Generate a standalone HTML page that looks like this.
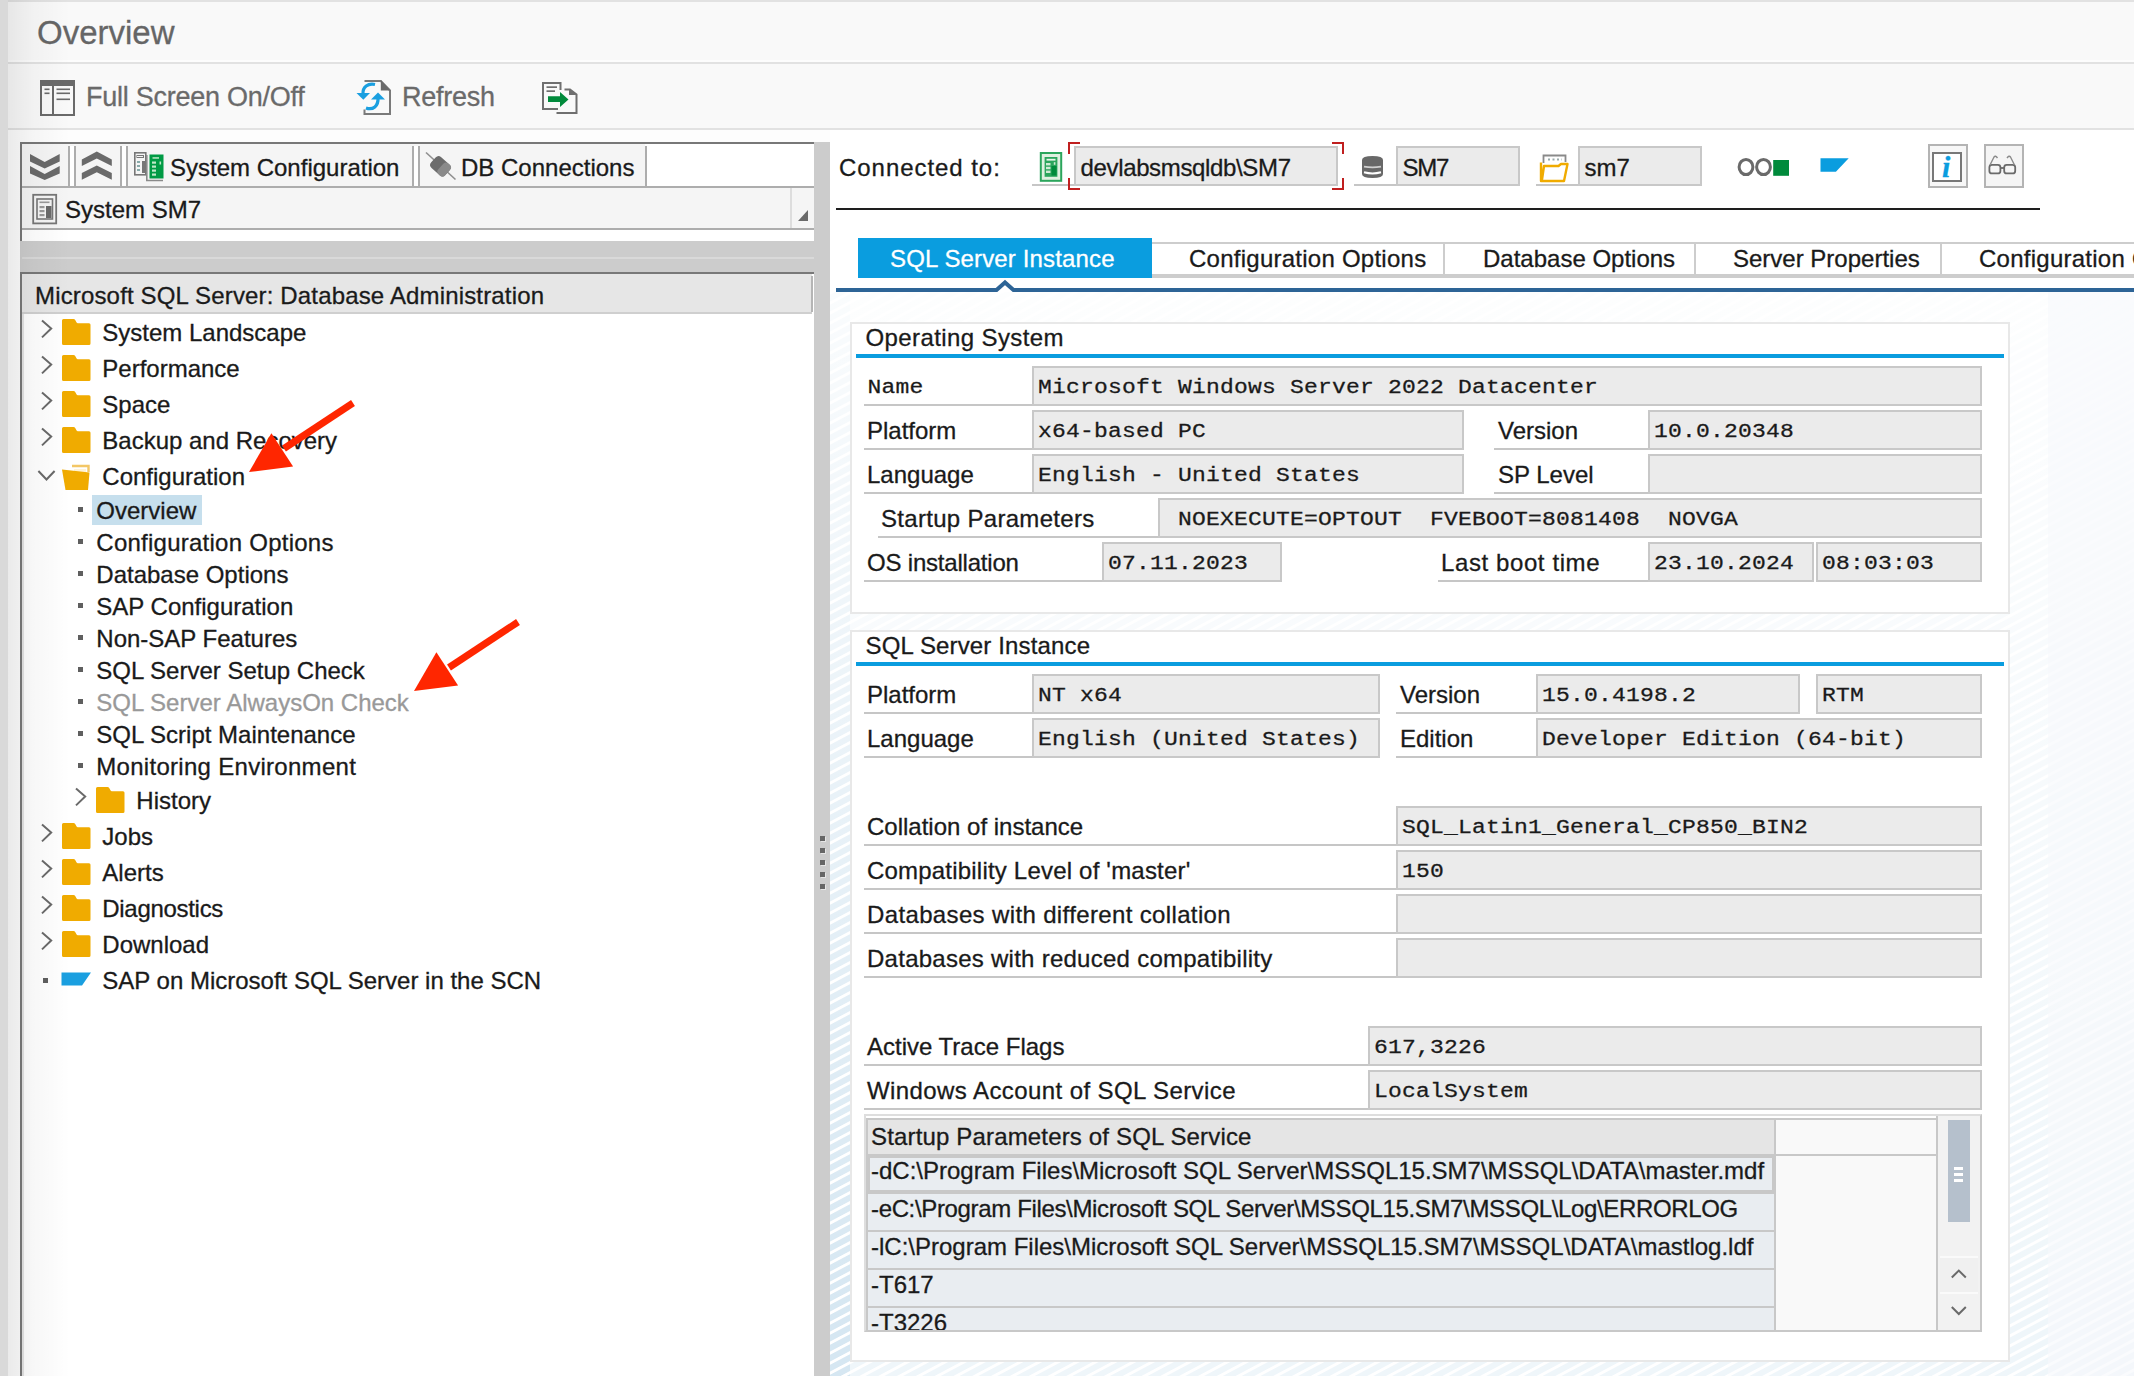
<!DOCTYPE html>
<html><head><meta charset="utf-8"><title>Overview</title>
<style>
html,body{margin:0;padding:0;}
body{width:2134px;height:1376px;position:relative;overflow:hidden;background:#f9f9f9;font-family:"Liberation Sans",sans-serif;}
div{box-sizing:border-box;}
.t{position:absolute;white-space:pre;font-size:24px;line-height:30px;color:#1a1a1a;-webkit-text-stroke:0.3px #1a1a1a;}
.s{font-family:"Liberation Sans",sans-serif;}
.m{font-family:"Liberation Mono",monospace;}
.r{font-family:"Liberation Serif",serif;}
</style></head><body>
<div style="position:absolute;left:0px;top:0px;width:2134px;height:130px;background:#f9f9f9;"></div>
<div style="position:absolute;left:0px;top:0px;width:2134px;height:2px;background:#e2e2e2;"></div>
<div style="position:absolute;left:8px;top:60px;width:2126px;height:2px;background:#fdfdfd;"></div>
<div style="position:absolute;left:8px;top:62px;width:2126px;height:2px;background:#e2e2e2;"></div>
<div style="position:absolute;left:8px;top:128px;width:2126px;height:2px;background:#e2e2e2;"></div>
<div style="position:absolute;left:0px;top:130px;width:830px;height:1246px;background:#fdfdfd;"></div>
<div style="position:absolute;left:830px;top:130px;width:1304px;height:1246px;background:#ffffff;"></div>
<div class="t s" style="left:37px;top:12.07px;font-size:33px;line-height:41px;color:#666666;-webkit-text-stroke-color:#666666;">Overview</div>
<svg style="position:absolute;left:38px;top:78px;" width="42" height="40" viewBox="0 0 42 40">
<rect x="3" y="3" width="33" height="34" fill="#f9f9f9" stroke="#6a6a6a" stroke-width="2"/>
<rect x="2" y="2" width="35" height="6" fill="#6a6a6a"/>
<rect x="14" y="7" width="2" height="30" fill="#6a6a6a"/>
<rect x="6.5" y="10.5" width="5" height="1.6" fill="#6a6a6a"/>
<rect x="6.5" y="14.5" width="5" height="1.6" fill="#6a6a6a"/>
<rect x="18.5" y="10.5" width="13.5" height="1.6" fill="#6a6a6a"/>
<rect x="18.5" y="14.5" width="13.5" height="1.6" fill="#6a6a6a"/>
<rect x="18.5" y="20.5" width="13.5" height="1.6" fill="#6a6a6a"/>
</svg>
<div class="t s" style="left:86px;top:79.64px;font-size:27px;line-height:34px;color:#6a6a6a;-webkit-text-stroke-color:#6a6a6a;letter-spacing:-0.25px;">Full Screen On/Off</div>
<svg style="position:absolute;left:354px;top:75px;" width="42" height="44" viewBox="0 0 42 44">
<path d="M10.5 6 H26.8 L36 15.5 V39 H10.5 V34.5" fill="none" stroke="#7a7a7a" stroke-width="2"/>
<path d="M26.8 5 V15.5 H36.5 Z" fill="#6a6a6a"/>
<path d="M21 9.5 C14 8 8.5 12 9 19" fill="none" stroke="#1a9fe0" stroke-width="3.2"/>
<path d="M2.5 18 H16 L9.3 24.8 Z" fill="#1a9fe0"/>
<path d="M12 33 C19 35.5 24.5 31 24 23" fill="none" stroke="#1a9fe0" stroke-width="3.2"/>
<path d="M17 24.5 H31 L24 17.6 Z" fill="#1a9fe0"/>
</svg>
<div class="t s" style="left:402px;top:79.64px;font-size:27px;line-height:34px;color:#6a6a6a;-webkit-text-stroke-color:#6a6a6a;letter-spacing:-0.25px;">Refresh</div>
<svg style="position:absolute;left:538px;top:78px;" width="44" height="40" viewBox="0 0 44 40">
<path d="M22.5 12 V5 H5 V31 H20" fill="none" stroke="#6f6f6f" stroke-width="2"/>
<rect x="8.5" y="8.3" width="10.5" height="1.7" fill="#6f6f6f"/>
<rect x="8.5" y="12.3" width="8.5" height="1.7" fill="#6f6f6f"/>
<path d="M26.5 11.5 H32 L38.5 16.5 V35 H18.5" fill="none" stroke="#6f6f6f" stroke-width="2"/>
<path d="M31 11 V17 H38.5 Z" fill="#6f6f6f"/>
<path d="M10 18.2 H22 V14 L30.5 21.5 L22 29 V24 H10 Z" fill="#008a3b"/>
</svg>
<div style="position:absolute;left:814px;top:142px;width:16px;height:1234px;background:#cccccc;"></div>
<div style="position:absolute;left:22px;top:144px;width:792px;height:42px;background:#f5f5f5;"></div>
<div style="position:absolute;left:645px;top:144px;width:169px;height:42px;background:#ffffff;"></div>
<div style="position:absolute;left:20px;top:142px;width:794px;height:2px;background:#787878;"></div>
<div style="position:absolute;left:20px;top:142px;width:2px;height:100px;background:#787878;"></div>
<div style="position:absolute;left:22px;top:186px;width:792px;height:2px;background:#adadad;"></div>
<div style="position:absolute;left:22px;top:188px;width:792px;height:40px;background:#f5f5f5;"></div>
<div style="position:absolute;left:22px;top:228px;width:792px;height:2px;background:#adadad;"></div>
<div style="position:absolute;left:22px;top:230px;width:792px;height:11px;background:#ffffff;"></div>
<div style="position:absolute;left:20px;top:241px;width:794px;height:31px;background:#cccccc;"></div>
<div style="position:absolute;left:22px;top:257px;width:792px;height:2px;background:#d9d9d9;"></div>
<div style="position:absolute;left:68px;top:146px;width:2px;height:40px;background:#adadad;"></div>
<div style="position:absolute;left:70px;top:146px;width:4px;height:40px;background:#ffffff;"></div>
<div style="position:absolute;left:74px;top:146px;width:2px;height:40px;background:#adadad;"></div>
<div style="position:absolute;left:120px;top:146px;width:2px;height:40px;background:#adadad;"></div>
<div style="position:absolute;left:122px;top:146px;width:4px;height:40px;background:#ffffff;"></div>
<div style="position:absolute;left:126px;top:146px;width:2px;height:40px;background:#adadad;"></div>
<div style="position:absolute;left:412px;top:146px;width:2px;height:40px;background:#adadad;"></div>
<div style="position:absolute;left:414px;top:146px;width:4px;height:40px;background:#ffffff;"></div>
<div style="position:absolute;left:418px;top:146px;width:2px;height:40px;background:#adadad;"></div>
<div style="position:absolute;left:645px;top:146px;width:2px;height:40px;background:#adadad;"></div>
<svg style="position:absolute;left:28px;top:150px;" width="34" height="32" viewBox="0 0 34 32">
<path d="M2 4 L16.7 12 L31.7 4 V11.5 L16.7 18.5 L2 11.5 Z" fill="#6a6a6a"/>
<path d="M2 16 L16.7 24 L31.7 16 V23.5 L16.7 30 L2 23.5 Z" fill="#6a6a6a"/>
</svg>
<svg style="position:absolute;left:80px;top:150px;" width="34" height="32" viewBox="0 0 34 32">
<path d="M1.8 9.5 L16.8 1.6 L31.8 9.5 V16 L16.8 8.6 L1.8 16 Z" fill="#6a6a6a"/>
<path d="M1.8 23 L16.8 15.5 L31.8 23 V29.7 L16.8 22.2 L1.8 29.7 Z" fill="#6a6a6a"/>
</svg>
<svg style="position:absolute;left:132px;top:150px;" width="34" height="34" viewBox="0 0 34 34">
<rect x="2.8" y="2.8" width="11" height="22" fill="#f5f5f5" stroke="#777" stroke-width="1.6"/>
<rect x="5" y="5.5" width="6.5" height="2" fill="none" stroke="#777" stroke-width="1"/>
<rect x="5" y="11" width="3" height="2" fill="#8aa"/><rect x="5" y="15" width="3" height="2" fill="#8aa"/><rect x="5" y="19" width="3" height="2" fill="#8aa"/>
<rect x="10" y="11" width="3" height="12" fill="#777"/>
<path d="M14.8 5 V30.5 H31" fill="none" stroke="#8a8a8a" stroke-width="1.6"/>
<rect x="17.5" y="4.5" width="14" height="24" fill="#009a44"/>
<rect x="20.5" y="7.2" width="6.5" height="1.5" fill="#bfe8c8"/>
<rect x="20" y="11.5" width="4" height="2.2" fill="#bfe8c8"/><rect x="20" y="15.5" width="4" height="2.2" fill="#bfe8c8"/><rect x="20" y="19.5" width="4" height="2.2" fill="#bfe8c8"/><rect x="20" y="23.5" width="4" height="2.2" fill="#bfe8c8"/>
<rect x="27.5" y="11.5" width="1.6" height="3" fill="#bfe8c8"/>
</svg>
<div class="t s" style="left:170px;top:152.68px;">System Configuration</div>
<svg style="position:absolute;left:422px;top:148px;" width="38" height="36" viewBox="0 0 38 36">
<path d="M4 4.5 L33.5 31.5" stroke="#8f8f8f" stroke-width="1.6"/>
<g transform="rotate(42 18.5 18.2)">
<rect x="9" y="11" width="19" height="14.5" rx="4" fill="#6c6c6c"/>
<rect x="19" y="11" width="9" height="14.5" rx="3.5" fill="#8a8a8a"/>
</g>
</svg>
<div class="t s" style="left:461px;top:152.68px;">DB Connections</div>
<svg style="position:absolute;left:30px;top:192px;" width="30" height="34" viewBox="0 0 30 34">
<rect x="3.2" y="2.8" width="23" height="28.6" fill="#f5f5f5" stroke="#777" stroke-width="1.8"/>
<rect x="7" y="7" width="15.5" height="20" fill="none" stroke="#777" stroke-width="1.6"/>
<rect x="9.5" y="9.5" width="10" height="1.6" fill="#999"/>
<rect x="9.5" y="14" width="5" height="2.2" fill="#999"/><rect x="9.5" y="18" width="5" height="2.2" fill="#999"/><rect x="9.5" y="22" width="5" height="2.2" fill="#999"/>
<rect x="16" y="14" width="5.5" height="12" fill="#6a6a6a"/>
</svg>
<div class="t s" style="left:65px;top:194.68px;">System SM7</div>
<div style="position:absolute;left:790px;top:188px;width:2px;height:40px;background:#dddddd;"></div>
<svg style="position:absolute;left:792px;top:188px;" width="22" height="40" viewBox="0 0 22 40"><path d="M6 33 L16 33 L16 22 Z" fill="#6a6a6a"/></svg>
<div style="position:absolute;left:22px;top:274px;width:792px;height:1102px;background:#ffffff;"></div>
<div style="position:absolute;left:20px;top:272px;width:794px;height:2px;background:#787878;"></div>
<div style="position:absolute;left:20px;top:272px;width:2px;height:1104px;background:#787878;"></div>
<div style="position:absolute;left:22px;top:314px;width:2px;height:1062px;background:#e3e3e3;"></div>
<div style="position:absolute;left:22px;top:274px;width:790px;height:38px;background:#e6e6e6;"></div>
<div style="position:absolute;left:22px;top:312px;width:790px;height:2px;background:#cfcfcf;"></div>
<div style="position:absolute;left:811px;top:276px;width:2px;height:36px;background:#b5b5b5;"></div>
<div class="t s" style="left:35px;top:280.68px;letter-spacing:0.16px;">Microsoft SQL Server: Database Administration</div>
<svg style="position:absolute;left:40px;top:319px;" width="14" height="20" viewBox="0 0 14 20"><path d="M2 1.4 L11.2 9.5 L2 18.4" fill="none" stroke="#6a6a6a" stroke-width="2"/></svg>
<svg style="position:absolute;left:62px;top:319px;" width="30" height="27" viewBox="0 0 30 27"><path d="M1.5 0 H11.5 Q12.6 0 13.2 1 L14.6 3.6 Q15 4.2 15.8 4.2 H27 Q28.5 4.2 28.5 5.7 V24.5 Q28.5 26 27 26 H1.5 Q0 26 0 24.5 V1.5 Q0 0 1.5 0 Z" fill="#f0ab00"/></svg>
<div class="t s" style="left:102.3px;top:317.68px;">System Landscape</div>
<svg style="position:absolute;left:40px;top:355px;" width="14" height="20" viewBox="0 0 14 20"><path d="M2 1.4 L11.2 9.5 L2 18.4" fill="none" stroke="#6a6a6a" stroke-width="2"/></svg>
<svg style="position:absolute;left:62px;top:355px;" width="30" height="27" viewBox="0 0 30 27"><path d="M1.5 0 H11.5 Q12.6 0 13.2 1 L14.6 3.6 Q15 4.2 15.8 4.2 H27 Q28.5 4.2 28.5 5.7 V24.5 Q28.5 26 27 26 H1.5 Q0 26 0 24.5 V1.5 Q0 0 1.5 0 Z" fill="#f0ab00"/></svg>
<div class="t s" style="left:102.3px;top:353.68px;">Performance</div>
<svg style="position:absolute;left:40px;top:391px;" width="14" height="20" viewBox="0 0 14 20"><path d="M2 1.4 L11.2 9.5 L2 18.4" fill="none" stroke="#6a6a6a" stroke-width="2"/></svg>
<svg style="position:absolute;left:62px;top:391px;" width="30" height="27" viewBox="0 0 30 27"><path d="M1.5 0 H11.5 Q12.6 0 13.2 1 L14.6 3.6 Q15 4.2 15.8 4.2 H27 Q28.5 4.2 28.5 5.7 V24.5 Q28.5 26 27 26 H1.5 Q0 26 0 24.5 V1.5 Q0 0 1.5 0 Z" fill="#f0ab00"/></svg>
<div class="t s" style="left:102.3px;top:389.68px;">Space</div>
<svg style="position:absolute;left:40px;top:427px;" width="14" height="20" viewBox="0 0 14 20"><path d="M2 1.4 L11.2 9.5 L2 18.4" fill="none" stroke="#6a6a6a" stroke-width="2"/></svg>
<svg style="position:absolute;left:62px;top:427px;" width="30" height="27" viewBox="0 0 30 27"><path d="M1.5 0 H11.5 Q12.6 0 13.2 1 L14.6 3.6 Q15 4.2 15.8 4.2 H27 Q28.5 4.2 28.5 5.7 V24.5 Q28.5 26 27 26 H1.5 Q0 26 0 24.5 V1.5 Q0 0 1.5 0 Z" fill="#f0ab00"/></svg>
<div class="t s" style="left:102.3px;top:425.68px;">Backup and Recovery</div>
<svg style="position:absolute;left:37px;top:469px;" width="20" height="14" viewBox="0 0 20 14"><path d="M1.4 2 L9.5 10.5 L17.6 2" fill="none" stroke="#6a6a6a" stroke-width="2"/></svg>
<svg style="position:absolute;left:62px;top:464px;" width="30" height="27" viewBox="0 0 30 27">
<path d="M10 2 H26.5 V8" fill="none" stroke="#f3c766" stroke-width="2.4"/>
<path d="M12 5 H24 V9 H12 Z" fill="#fff3d6"/>
<path d="M0 5.5 L27.5 8.5 L26 26 H3.5 Z" fill="#f0ab00"/>
</svg>
<div class="t s" style="left:102.3px;top:461.68px;">Configuration</div>
<div style="position:absolute;left:92px;top:495px;width:110px;height:30px;background:#c6dfed;"></div>
<div style="position:absolute;left:78px;top:507px;width:5px;height:5px;background:#5f5f5f;"></div>
<div class="t s" style="left:96.3px;top:495.68px;">Overview</div>
<div style="position:absolute;left:78px;top:539px;width:5px;height:5px;background:#5f5f5f;"></div>
<div class="t s" style="left:96.3px;top:527.68px;letter-spacing:0.25px;">Configuration Options</div>
<div style="position:absolute;left:78px;top:571px;width:5px;height:5px;background:#5f5f5f;"></div>
<div class="t s" style="left:96.3px;top:559.68px;">Database Options</div>
<div style="position:absolute;left:78px;top:603px;width:5px;height:5px;background:#5f5f5f;"></div>
<div class="t s" style="left:96.3px;top:591.68px;">SAP Configuration</div>
<div style="position:absolute;left:78px;top:635px;width:5px;height:5px;background:#5f5f5f;"></div>
<div class="t s" style="left:96.3px;top:623.68px;">Non-SAP Features</div>
<div style="position:absolute;left:78px;top:667px;width:5px;height:5px;background:#5f5f5f;"></div>
<div class="t s" style="left:96.3px;top:655.68px;">SQL Server Setup Check</div>
<div style="position:absolute;left:78px;top:699px;width:5px;height:5px;background:#5f5f5f;"></div>
<div class="t s" style="left:96.3px;top:687.68px;color:#999999;-webkit-text-stroke-color:#999999;">SQL Server AlwaysOn Check</div>
<div style="position:absolute;left:78px;top:731px;width:5px;height:5px;background:#5f5f5f;"></div>
<div class="t s" style="left:96.3px;top:719.68px;">SQL Script Maintenance</div>
<div style="position:absolute;left:78px;top:763px;width:5px;height:5px;background:#5f5f5f;"></div>
<div class="t s" style="left:96.3px;top:751.68px;letter-spacing:0.29px;">Monitoring Environment</div>
<svg style="position:absolute;left:74px;top:787px;" width="14" height="20" viewBox="0 0 14 20"><path d="M2 1.4 L11.2 9.5 L2 18.4" fill="none" stroke="#6a6a6a" stroke-width="2"/></svg>
<svg style="position:absolute;left:96px;top:787px;" width="30" height="27" viewBox="0 0 30 27"><path d="M1.5 0 H11.5 Q12.6 0 13.2 1 L14.6 3.6 Q15 4.2 15.8 4.2 H27 Q28.5 4.2 28.5 5.7 V24.5 Q28.5 26 27 26 H1.5 Q0 26 0 24.5 V1.5 Q0 0 1.5 0 Z" fill="#f0ab00"/></svg>
<div class="t s" style="left:136.3px;top:785.68px;">History</div>
<svg style="position:absolute;left:40px;top:823px;" width="14" height="20" viewBox="0 0 14 20"><path d="M2 1.4 L11.2 9.5 L2 18.4" fill="none" stroke="#6a6a6a" stroke-width="2"/></svg>
<svg style="position:absolute;left:62px;top:823px;" width="30" height="27" viewBox="0 0 30 27"><path d="M1.5 0 H11.5 Q12.6 0 13.2 1 L14.6 3.6 Q15 4.2 15.8 4.2 H27 Q28.5 4.2 28.5 5.7 V24.5 Q28.5 26 27 26 H1.5 Q0 26 0 24.5 V1.5 Q0 0 1.5 0 Z" fill="#f0ab00"/></svg>
<div class="t s" style="left:102.3px;top:821.68px;">Jobs</div>
<svg style="position:absolute;left:40px;top:859px;" width="14" height="20" viewBox="0 0 14 20"><path d="M2 1.4 L11.2 9.5 L2 18.4" fill="none" stroke="#6a6a6a" stroke-width="2"/></svg>
<svg style="position:absolute;left:62px;top:859px;" width="30" height="27" viewBox="0 0 30 27"><path d="M1.5 0 H11.5 Q12.6 0 13.2 1 L14.6 3.6 Q15 4.2 15.8 4.2 H27 Q28.5 4.2 28.5 5.7 V24.5 Q28.5 26 27 26 H1.5 Q0 26 0 24.5 V1.5 Q0 0 1.5 0 Z" fill="#f0ab00"/></svg>
<div class="t s" style="left:102.3px;top:857.68px;">Alerts</div>
<svg style="position:absolute;left:40px;top:895px;" width="14" height="20" viewBox="0 0 14 20"><path d="M2 1.4 L11.2 9.5 L2 18.4" fill="none" stroke="#6a6a6a" stroke-width="2"/></svg>
<svg style="position:absolute;left:62px;top:895px;" width="30" height="27" viewBox="0 0 30 27"><path d="M1.5 0 H11.5 Q12.6 0 13.2 1 L14.6 3.6 Q15 4.2 15.8 4.2 H27 Q28.5 4.2 28.5 5.7 V24.5 Q28.5 26 27 26 H1.5 Q0 26 0 24.5 V1.5 Q0 0 1.5 0 Z" fill="#f0ab00"/></svg>
<div class="t s" style="left:102.3px;top:893.68px;letter-spacing:-0.3px;">Diagnostics</div>
<svg style="position:absolute;left:40px;top:931px;" width="14" height="20" viewBox="0 0 14 20"><path d="M2 1.4 L11.2 9.5 L2 18.4" fill="none" stroke="#6a6a6a" stroke-width="2"/></svg>
<svg style="position:absolute;left:62px;top:931px;" width="30" height="27" viewBox="0 0 30 27"><path d="M1.5 0 H11.5 Q12.6 0 13.2 1 L14.6 3.6 Q15 4.2 15.8 4.2 H27 Q28.5 4.2 28.5 5.7 V24.5 Q28.5 26 27 26 H1.5 Q0 26 0 24.5 V1.5 Q0 0 1.5 0 Z" fill="#f0ab00"/></svg>
<div class="t s" style="left:102.3px;top:929.68px;">Download</div>
<div style="position:absolute;left:43px;top:978px;width:5px;height:5px;background:#5f5f5f;"></div>
<svg style="position:absolute;left:60px;top:970px;" width="32" height="18" viewBox="0 0 32 18"><path d="M1.5 2.5 H31 L22 15.5 H1.5 Z" fill="#1a9fe0"/></svg>
<div class="t s" style="left:102.3px;top:965.68px;">SAP on Microsoft SQL Server in the SCN</div>
<div style="position:absolute;left:821px;top:837px;width:5px;height:5px;background:#e6e6e6;"></div>
<div style="position:absolute;left:820px;top:836px;width:5px;height:5px;background:#666666;"></div>
<div style="position:absolute;left:821px;top:849px;width:5px;height:5px;background:#e6e6e6;"></div>
<div style="position:absolute;left:820px;top:848px;width:5px;height:5px;background:#666666;"></div>
<div style="position:absolute;left:821px;top:861px;width:5px;height:5px;background:#e6e6e6;"></div>
<div style="position:absolute;left:820px;top:860px;width:5px;height:5px;background:#666666;"></div>
<div style="position:absolute;left:821px;top:873px;width:5px;height:5px;background:#e6e6e6;"></div>
<div style="position:absolute;left:820px;top:872px;width:5px;height:5px;background:#666666;"></div>
<div style="position:absolute;left:821px;top:885px;width:5px;height:5px;background:#e6e6e6;"></div>
<div style="position:absolute;left:820px;top:884px;width:5px;height:5px;background:#666666;"></div>
<svg style="position:absolute;left:0px;top:0px;pointer-events:none;" width="2134" height="1376" viewBox="0 0 2134 1376"><g transform="translate(0 0)"><path d="M353 403 L284 448.5" stroke="#ff2600" stroke-width="7"/><path d="M249 472 L271.4 433.3 L293.1 466.6 Z" fill="#ff2600"/></g></svg>
<svg style="position:absolute;left:0px;top:0px;pointer-events:none;" width="2134" height="1376" viewBox="0 0 2134 1376"><g transform="translate(165 219)"><path d="M353 403 L284 448.5" stroke="#ff2600" stroke-width="7"/><path d="M249 472 L271.4 433.3 L293.1 466.6 Z" fill="#ff2600"/></g></svg>
<div style="position:absolute;left:830px;top:292px;width:1304px;height:1084px;background:repeating-linear-gradient(152deg,#ffffff 0px,#ffffff 2px,#d6e7f2 2.9px,#d6e7f2 8px,#ffffff 8.83px);"></div>
<div style="position:absolute;left:850px;top:292px;width:1284px;height:1084px;background:rgba(255,255,255,0.62);"></div>
<div style="position:absolute;left:830px;top:292px;width:1304px;height:1084px;background:linear-gradient(180deg,rgba(255,255,255,0.88) 0px,rgba(255,255,255,0.42) 560px,rgba(255,255,255,0) 1050px);"></div>
<div style="position:absolute;left:2048px;top:292px;width:86px;height:1084px;background:rgba(246,249,251,0.6);"></div>
<div class="t s" style="left:839px;top:152.68px;letter-spacing:0.95px;">Connected to:</div>
<svg style="position:absolute;left:1038px;top:150px;" width="26" height="34" viewBox="0 0 26 34">
<rect x="2.8" y="3" width="20.4" height="27.8" fill="#dff0e0" stroke="#2ba55c" stroke-width="2"/>
<rect x="6.6" y="7" width="12.8" height="19.8" fill="#2ba55c"/>
<rect x="8.5" y="8.8" width="9" height="1.8" fill="#e8f6ea"/>
<rect x="8" y="13" width="4.5" height="2.4" fill="#cfead4"/><rect x="8" y="16.8" width="4.5" height="2.4" fill="#cfead4"/><rect x="8" y="20.6" width="4.5" height="2.4" fill="#cfead4"/>
<rect x="13.5" y="16" width="5" height="9.5" fill="#008a3b"/>
<rect x="15.8" y="12.2" width="1.6" height="2.6" fill="#cfead4"/>
</svg>
<div style="position:absolute;left:1032px;top:184px;width:42px;height:2px;background:#c6c6c6;"></div>
<div style="position:absolute;left:1074px;top:146px;width:264px;height:40px;background:#ebebeb;border:2px solid #c8c8c8;"></div>
<div class="t s" style="left:1080.5px;top:152.68px;letter-spacing:-0.35px;">devlabsmsqldb\SM7</div>
<div style="position:absolute;left:1068px;top:142px;width:12px;height:2px;background:#c01f1f;"></div>
<div style="position:absolute;left:1068px;top:142px;width:2px;height:12px;background:#c01f1f;"></div>
<div style="position:absolute;left:1332px;top:142px;width:12px;height:2px;background:#c01f1f;"></div>
<div style="position:absolute;left:1342px;top:142px;width:2px;height:12px;background:#c01f1f;"></div>
<div style="position:absolute;left:1068px;top:188px;width:12px;height:2px;background:#c01f1f;"></div>
<div style="position:absolute;left:1068px;top:178px;width:2px;height:12px;background:#c01f1f;"></div>
<div style="position:absolute;left:1332px;top:188px;width:12px;height:2px;background:#c01f1f;"></div>
<div style="position:absolute;left:1342px;top:178px;width:2px;height:12px;background:#c01f1f;"></div>
<div style="position:absolute;left:1354px;top:184px;width:42px;height:2px;background:#c6c6c6;"></div>
<svg style="position:absolute;left:1360px;top:154px;" width="26" height="26" viewBox="0 0 26 26">
<path d="M2 6 Q2 2 12.5 2 Q23 2 23 6 V20 Q23 24 12.5 24 Q2 24 2 20 Z" fill="#686868"/>
<path d="M4 12.6 Q12.5 14.2 21 12.6" fill="none" stroke="#d0d0d0" stroke-width="1.8"/>
<path d="M4 18.2 Q12.5 20.6 21 18.2" fill="none" stroke="#ffffff" stroke-width="2"/>
</svg>
<div style="position:absolute;left:1396px;top:146px;width:124px;height:40px;background:#ebebeb;border:2px solid #c8c8c8;"></div>
<div class="t s" style="left:1402.5px;top:152.68px;letter-spacing:-1.3px;">SM7</div>
<div style="position:absolute;left:1536px;top:184px;width:42px;height:2px;background:#c6c6c6;"></div>
<svg style="position:absolute;left:1538px;top:152px;" width="34" height="32" viewBox="0 0 34 32">
<path d="M5.5 11 V3.5 H27.5 V10" fill="none" stroke="#8a8a8a" stroke-width="1.8"/>
<path d="M10 7.5 H24" stroke="#9aa" stroke-width="2" stroke-dasharray="2 2.5"/>
<path d="M3 10.5 V29 H26 L29.5 12 H23 L20.5 14 H6 L3.8 29" fill="none" stroke="#f0ab00" stroke-width="2.4" stroke-linejoin="round"/>
</svg>
<div style="position:absolute;left:1578px;top:146px;width:124px;height:40px;background:#ebebeb;border:2px solid #c8c8c8;"></div>
<div class="t s" style="left:1584.5px;top:152.68px;">sm7</div>
<svg style="position:absolute;left:1734px;top:154px;" width="60" height="26" viewBox="0 0 60 26">
<ellipse cx="12" cy="13" rx="6.9" ry="7.6" fill="none" stroke="#6a6a6a" stroke-width="3"/>
<ellipse cx="29.5" cy="13" rx="6.9" ry="7.6" fill="none" stroke="#6a6a6a" stroke-width="3"/>
<rect x="39.2" y="6" width="15.8" height="15.8" fill="#008a3b"/>
</svg>
<svg style="position:absolute;left:1818px;top:156px;" width="34" height="18" viewBox="0 0 34 18"><path d="M2.5 2.3 H30.7 L17.9 15.8 H2.5 Z" fill="#0a9ddf"/></svg>
<div style="position:absolute;left:1928px;top:144px;width:40px;height:44px;background:#f7f7f7;border:2px solid #b4b4b4;"></div>
<div style="position:absolute;left:1932px;top:152px;width:30px;height:30px;background:#ffffff;border:2px solid #787878;"></div>
<div class="t r" style="left:1942px;top:147.88px;font-size:30px;line-height:38px;color:#0a9ddf;-webkit-text-stroke-color:#0a9ddf;font-style:italic;font-weight:bold;">i</div>
<div style="position:absolute;left:1984px;top:144px;width:40px;height:44px;background:#f5f5f5;border:2px solid #b4b4b4;"></div>
<svg style="position:absolute;left:1986px;top:152px;" width="36" height="26" viewBox="0 0 36 26">
<rect x="3.4" y="12.8" width="11" height="8.6" rx="2.5" fill="none" stroke="#6a6a6a" stroke-width="1.8"/>
<rect x="18.2" y="12.8" width="11" height="8.6" rx="2.5" fill="none" stroke="#6a6a6a" stroke-width="1.8"/>
<path d="M14.4 16 H18.2" stroke="#6a6a6a" stroke-width="1.8"/>
<path d="M4 13 L8 5 Q9.5 3 11.5 6" fill="none" stroke="#8a8a8a" stroke-width="1.4"/>
<path d="M28.5 13 L24.5 5 Q23 3 21 6" fill="none" stroke="#8a8a8a" stroke-width="1.4"/>
</svg>
<div style="position:absolute;left:836px;top:208px;width:1204px;height:2px;background:#1e1e1e;"></div>
<div style="position:absolute;left:858px;top:238px;width:294px;height:40px;background:#0a9ddf;"></div>
<div class="t s" style="left:890px;top:243.68px;color:#ffffff;-webkit-text-stroke-color:#ffffff;letter-spacing:0.15px;">SQL Server Instance</div>
<div style="position:absolute;left:1152px;top:242px;width:982px;height:2px;background:#cdcdcd;"></div>
<div style="position:absolute;left:1152px;top:274px;width:982px;height:4px;background:#cdcdcd;"></div>
<div style="position:absolute;left:1443px;top:244px;width:2px;height:30px;background:#cdcdcd;"></div>
<div style="position:absolute;left:1694px;top:244px;width:2px;height:30px;background:#cdcdcd;"></div>
<div style="position:absolute;left:1940px;top:244px;width:2px;height:30px;background:#cdcdcd;"></div>
<div class="t s" style="left:1189px;top:243.68px;letter-spacing:0.25px;">Configuration Options</div>
<div class="t s" style="left:1483px;top:243.68px;">Database Options</div>
<div class="t s" style="left:1733px;top:243.68px;">Server Properties</div>
<div class="t s" style="left:1979px;top:243.68px;letter-spacing:0.25px;">Configuration Options</div>
<svg style="position:absolute;left:830px;top:276px;" width="1304" height="18" viewBox="0 0 1304 18"><path d="M6 14 H166.5 L175 6.4 L183.5 14 H1304" fill="none" stroke="#2d6496" stroke-width="4"/></svg>
<div style="position:absolute;left:850px;top:322px;width:1160px;height:292px;background:#ffffff;border:2px solid #e8e8e8;"></div>
<div class="t s" style="left:865.5px;top:323.28px;letter-spacing:0.4px;">Operating System</div>
<div style="position:absolute;left:856px;top:354px;width:1148px;height:4px;background:#0a9ddf;"></div>
<div class="t m" style="left:867.5px;top:373.12px;font-size:23px;line-height:29px;letter-spacing:0.2px;transform:scaleY(0.9);transform-origin:0 20.63px;">Name</div>
<div style="position:absolute;left:864px;top:404px;width:168px;height:2px;background:#c6c6c6;"></div>
<div style="position:absolute;left:1032px;top:366px;width:950px;height:40px;background:#ebebeb;border:2px solid #c8c8c8;"></div>
<div class="t m" style="left:1038px;top:373.12px;font-size:23px;line-height:29px;letter-spacing:0.2px;transform:scaleY(0.9);transform-origin:0 20.63px;">Microsoft Windows Server 2022 Datacenter</div>
<div class="t s" style="left:867px;top:415.68px;">Platform</div>
<div style="position:absolute;left:864px;top:448px;width:168px;height:2px;background:#c6c6c6;"></div>
<div style="position:absolute;left:1032px;top:410px;width:432px;height:40px;background:#ebebeb;border:2px solid #c8c8c8;"></div>
<div class="t m" style="left:1038px;top:417.12px;font-size:23px;line-height:29px;letter-spacing:0.2px;transform:scaleY(0.9);transform-origin:0 20.63px;">x64-based PC</div>
<div class="t s" style="left:1498px;top:415.68px;">Version</div>
<div style="position:absolute;left:1494px;top:448px;width:154px;height:2px;background:#c6c6c6;"></div>
<div style="position:absolute;left:1648px;top:410px;width:334px;height:40px;background:#ebebeb;border:2px solid #c8c8c8;"></div>
<div class="t m" style="left:1654px;top:417.12px;font-size:23px;line-height:29px;letter-spacing:0.2px;transform:scaleY(0.9);transform-origin:0 20.63px;">10.0.20348</div>
<div class="t s" style="left:867px;top:459.68px;">Language</div>
<div style="position:absolute;left:864px;top:492px;width:168px;height:2px;background:#c6c6c6;"></div>
<div style="position:absolute;left:1032px;top:454px;width:432px;height:40px;background:#ebebeb;border:2px solid #c8c8c8;"></div>
<div class="t m" style="left:1038px;top:461.12px;font-size:23px;line-height:29px;letter-spacing:0.2px;transform:scaleY(0.9);transform-origin:0 20.63px;">English - United States</div>
<div class="t s" style="left:1498px;top:459.68px;">SP Level</div>
<div style="position:absolute;left:1494px;top:492px;width:154px;height:2px;background:#c6c6c6;"></div>
<div style="position:absolute;left:1648px;top:454px;width:334px;height:40px;background:#ebebeb;border:2px solid #c8c8c8;"></div>
<div class="t s" style="left:881px;top:503.68px;letter-spacing:0.3px;">Startup Parameters</div>
<div style="position:absolute;left:878px;top:536px;width:280px;height:2px;background:#c6c6c6;"></div>
<div style="position:absolute;left:1158px;top:498px;width:824px;height:40px;background:#ebebeb;border:2px solid #c8c8c8;"></div>
<div class="t m" style="left:1164px;top:505.12px;font-size:23px;line-height:29px;letter-spacing:0.2px;transform:scaleY(0.9);transform-origin:0 20.63px;"> NOEXECUTE=OPTOUT  FVEBOOT=8081408  NOVGA</div>
<div class="t s" style="left:867px;top:547.68px;letter-spacing:-0.2px;">OS installation</div>
<div style="position:absolute;left:864px;top:580px;width:238px;height:2px;background:#c6c6c6;"></div>
<div style="position:absolute;left:1102px;top:542px;width:180px;height:40px;background:#ebebeb;border:2px solid #c8c8c8;"></div>
<div class="t m" style="left:1108px;top:549.12px;font-size:23px;line-height:29px;letter-spacing:0.2px;transform:scaleY(0.9);transform-origin:0 20.63px;">07.11.2023</div>
<div class="t s" style="left:1441px;top:547.68px;letter-spacing:0.6px;">Last boot time</div>
<div style="position:absolute;left:1438px;top:580px;width:210px;height:2px;background:#c6c6c6;"></div>
<div style="position:absolute;left:1648px;top:542px;width:166px;height:40px;background:#ebebeb;border:2px solid #c8c8c8;"></div>
<div class="t m" style="left:1654px;top:549.12px;font-size:23px;line-height:29px;letter-spacing:0.2px;transform:scaleY(0.9);transform-origin:0 20.63px;">23.10.2024</div>
<div style="position:absolute;left:1816px;top:542px;width:166px;height:40px;background:#ebebeb;border:2px solid #c8c8c8;"></div>
<div class="t m" style="left:1822px;top:549.12px;font-size:23px;line-height:29px;letter-spacing:0.2px;transform:scaleY(0.9);transform-origin:0 20.63px;">08:03:03</div>
<div style="position:absolute;left:850px;top:630px;width:1160px;height:732px;background:#ffffff;border:2px solid #e8e8e8;"></div>
<div class="t s" style="left:865.5px;top:631.28px;letter-spacing:0.15px;">SQL Server Instance</div>
<div style="position:absolute;left:856px;top:662px;width:1148px;height:4px;background:#0a9ddf;"></div>
<div class="t s" style="left:867px;top:679.68px;">Platform</div>
<div style="position:absolute;left:864px;top:712px;width:168px;height:2px;background:#c6c6c6;"></div>
<div style="position:absolute;left:1032px;top:674px;width:348px;height:40px;background:#ebebeb;border:2px solid #c8c8c8;"></div>
<div class="t m" style="left:1038px;top:681.12px;font-size:23px;line-height:29px;letter-spacing:0.2px;transform:scaleY(0.9);transform-origin:0 20.63px;">NT x64</div>
<div class="t s" style="left:1400px;top:679.68px;">Version</div>
<div style="position:absolute;left:1396px;top:712px;width:140px;height:2px;background:#c6c6c6;"></div>
<div style="position:absolute;left:1536px;top:674px;width:264px;height:40px;background:#ebebeb;border:2px solid #c8c8c8;"></div>
<div class="t m" style="left:1542px;top:681.12px;font-size:23px;line-height:29px;letter-spacing:0.2px;transform:scaleY(0.9);transform-origin:0 20.63px;">15.0.4198.2</div>
<div style="position:absolute;left:1816px;top:674px;width:166px;height:40px;background:#ebebeb;border:2px solid #c8c8c8;"></div>
<div class="t m" style="left:1822px;top:681.12px;font-size:23px;line-height:29px;letter-spacing:0.2px;transform:scaleY(0.9);transform-origin:0 20.63px;">RTM</div>
<div class="t s" style="left:867px;top:723.68px;">Language</div>
<div style="position:absolute;left:864px;top:756px;width:168px;height:2px;background:#c6c6c6;"></div>
<div style="position:absolute;left:1032px;top:718px;width:348px;height:40px;background:#ebebeb;border:2px solid #c8c8c8;"></div>
<div class="t m" style="left:1038px;top:725.12px;font-size:23px;line-height:29px;letter-spacing:0.2px;transform:scaleY(0.9);transform-origin:0 20.63px;">English (United States)</div>
<div class="t s" style="left:1400px;top:723.68px;">Edition</div>
<div style="position:absolute;left:1396px;top:756px;width:140px;height:2px;background:#c6c6c6;"></div>
<div style="position:absolute;left:1536px;top:718px;width:446px;height:40px;background:#ebebeb;border:2px solid #c8c8c8;"></div>
<div class="t m" style="left:1542px;top:725.12px;font-size:23px;line-height:29px;letter-spacing:0.2px;transform:scaleY(0.9);transform-origin:0 20.63px;">Developer Edition (64-bit)</div>
<div class="t s" style="left:867px;top:811.68px;">Collation of instance</div>
<div style="position:absolute;left:864px;top:844px;width:532px;height:2px;background:#c6c6c6;"></div>
<div style="position:absolute;left:1396px;top:806px;width:586px;height:40px;background:#ebebeb;border:2px solid #c8c8c8;"></div>
<div class="t m" style="left:1402px;top:813.12px;font-size:23px;line-height:29px;letter-spacing:0.2px;transform:scaleY(0.9);transform-origin:0 20.63px;">SQL_Latin1_General_CP850_BIN2</div>
<div class="t s" style="left:867px;top:855.68px;letter-spacing:0.2px;">Compatibility Level of &#x27;master&#x27;</div>
<div style="position:absolute;left:864px;top:888px;width:532px;height:2px;background:#c6c6c6;"></div>
<div style="position:absolute;left:1396px;top:850px;width:586px;height:40px;background:#ebebeb;border:2px solid #c8c8c8;"></div>
<div class="t m" style="left:1402px;top:857.12px;font-size:23px;line-height:29px;letter-spacing:0.2px;transform:scaleY(0.9);transform-origin:0 20.63px;">150</div>
<div class="t s" style="left:867px;top:899.68px;letter-spacing:0.36px;">Databases with different collation</div>
<div style="position:absolute;left:864px;top:932px;width:532px;height:2px;background:#c6c6c6;"></div>
<div style="position:absolute;left:1396px;top:894px;width:586px;height:40px;background:#ebebeb;border:2px solid #c8c8c8;"></div>
<div class="t s" style="left:867px;top:943.68px;letter-spacing:0.26px;">Databases with reduced compatibility</div>
<div style="position:absolute;left:864px;top:976px;width:532px;height:2px;background:#c6c6c6;"></div>
<div style="position:absolute;left:1396px;top:938px;width:586px;height:40px;background:#ebebeb;border:2px solid #c8c8c8;"></div>
<div class="t s" style="left:867px;top:1031.68px;">Active Trace Flags</div>
<div style="position:absolute;left:864px;top:1064px;width:504px;height:2px;background:#c6c6c6;"></div>
<div style="position:absolute;left:1368px;top:1026px;width:614px;height:40px;background:#ebebeb;border:2px solid #c8c8c8;"></div>
<div class="t m" style="left:1374px;top:1033.12px;font-size:23px;line-height:29px;letter-spacing:0.2px;transform:scaleY(0.9);transform-origin:0 20.63px;">617,3226</div>
<div class="t s" style="left:867px;top:1075.68px;letter-spacing:0.41px;">Windows Account of SQL Service</div>
<div style="position:absolute;left:864px;top:1108px;width:504px;height:2px;background:#c6c6c6;"></div>
<div style="position:absolute;left:1368px;top:1070px;width:614px;height:40px;background:#ebebeb;border:2px solid #c8c8c8;"></div>
<div class="t m" style="left:1374px;top:1077.12px;font-size:23px;line-height:29px;letter-spacing:0.2px;transform:scaleY(0.9);transform-origin:0 20.63px;">LocalSystem</div>
<div style="position:absolute;left:864px;top:1114px;width:1118px;height:218px;background:#f9f9f9;border:2px solid #dedede;border-right-color:#c8c8c8;border-bottom-color:#c8c8c8;"></div>
<div style="position:absolute;left:866px;top:1116px;width:1070px;height:2px;background:#ffffff;"></div>
<div style="position:absolute;left:866px;top:1118px;width:1072px;height:2px;background:#c8c8c8;"></div>
<div style="position:absolute;left:866px;top:1118px;width:2px;height:212px;background:#c8c8c8;"></div>
<div style="position:absolute;left:868px;top:1120px;width:906px;height:34px;background:#e5e5e5;"></div>
<div style="position:absolute;left:866px;top:1154px;width:1072px;height:2px;background:#c8c8c8;"></div>
<div style="position:absolute;left:1774px;top:1118px;width:2px;height:212px;background:#c8c8c8;"></div>
<div style="position:absolute;left:1936px;top:1116px;width:2px;height:214px;background:#c8c8c8;"></div>
<div style="position:absolute;left:1938px;top:1116px;width:42px;height:214px;background:#f2f2f2;"></div>
<div class="t s" style="left:871px;top:1122.18px;letter-spacing:0.16px;">Startup Parameters of SQL Service</div>
<div style="position:absolute;left:868px;top:1156px;width:906px;height:174px;overflow:hidden;">
<div style="position:absolute;left:0;top:0px;width:906px;height:36px;background:#e9edf1;"></div>
<div style="position:absolute;left:0;top:36px;width:906px;height:2px;background:#c8c8c8;"></div>
<div style="position:absolute;left:0;top:38px;width:906px;height:36px;background:#e9edf1;"></div>
<div style="position:absolute;left:0;top:74px;width:906px;height:2px;background:#c8c8c8;"></div>
<div style="position:absolute;left:0;top:76px;width:906px;height:36px;background:#e9edf1;"></div>
<div style="position:absolute;left:0;top:112px;width:906px;height:2px;background:#c8c8c8;"></div>
<div style="position:absolute;left:0;top:114px;width:906px;height:36px;background:#e9edf1;"></div>
<div style="position:absolute;left:0;top:150px;width:906px;height:2px;background:#c8c8c8;"></div>
<div style="position:absolute;left:0;top:152px;width:906px;height:36px;background:#e9edf1;"></div>
<div style="position:absolute;left:0;top:188px;width:906px;height:2px;background:#c8c8c8;"></div>
</div>
<div style="position:absolute;left:866px;top:1154px;width:910px;height:40px;border:4px solid #c8c8c8;border-top-width:4px;"></div>
<div style="position:absolute;left:868px;top:1156px;width:906px;height:174px;overflow:hidden;">
<div class="t s" style="left:3px;top:0.18px;">-dC:\Program Files\Microsoft SQL Server\MSSQL15.SM7\MSSQL\DATA\master.mdf</div>
<div class="t s" style="left:3px;top:38.18px;letter-spacing:-0.35px;">-eC:\Program Files\Microsoft SQL Server\MSSQL15.SM7\MSSQL\Log\ERRORLOG</div>
<div class="t s" style="left:3px;top:76.18px;">-lC:\Program Files\Microsoft SQL Server\MSSQL15.SM7\MSSQL\DATA\mastlog.ldf</div>
<div class="t s" style="left:3px;top:114.18px;">-T617</div>
<div class="t s" style="left:3px;top:152.18px;">-T3226</div>
</div>
<div style="position:absolute;left:1948px;top:1120px;width:22px;height:102px;background:#b5c0cc;"></div>
<div style="position:absolute;left:1954px;top:1167px;width:9px;height:3px;background:#ffffff;"></div>
<div style="position:absolute;left:1954px;top:1173px;width:9px;height:3px;background:#ffffff;"></div>
<div style="position:absolute;left:1954px;top:1179px;width:9px;height:3px;background:#ffffff;"></div>
<div style="position:absolute;left:1940px;top:1258px;width:38px;height:34px;background:#f0f0f0;"></div>
<div style="position:absolute;left:1940px;top:1256px;width:38px;height:2px;background:#fafafa;"></div>
<div style="position:absolute;left:1940px;top:1292px;width:38px;height:2px;background:#fafafa;"></div>
<svg style="position:absolute;left:1948px;top:1266px;" width="22" height="16" viewBox="0 0 22 16"><path d="M3.8 11.5 L10.8 4.6 L17.8 11.5" fill="none" stroke="#6a6a6a" stroke-width="2"/></svg>
<svg style="position:absolute;left:1948px;top:1302px;" width="22" height="16" viewBox="0 0 22 16"><path d="M3.8 5 L10.8 12 L17.8 5" fill="none" stroke="#6a6a6a" stroke-width="2"/></svg>
<div style="position:absolute;left:0px;top:0px;width:8px;height:1376px;background:#d9d9d9;"></div>
<div style="position:absolute;left:8px;top:0;width:62px;height:1376px;background:linear-gradient(90deg,rgba(0,0,0,0.075) 0px,rgba(0,0,0,0.03) 25px,rgba(0,0,0,0) 62px);pointer-events:none;"></div>
</body></html>
